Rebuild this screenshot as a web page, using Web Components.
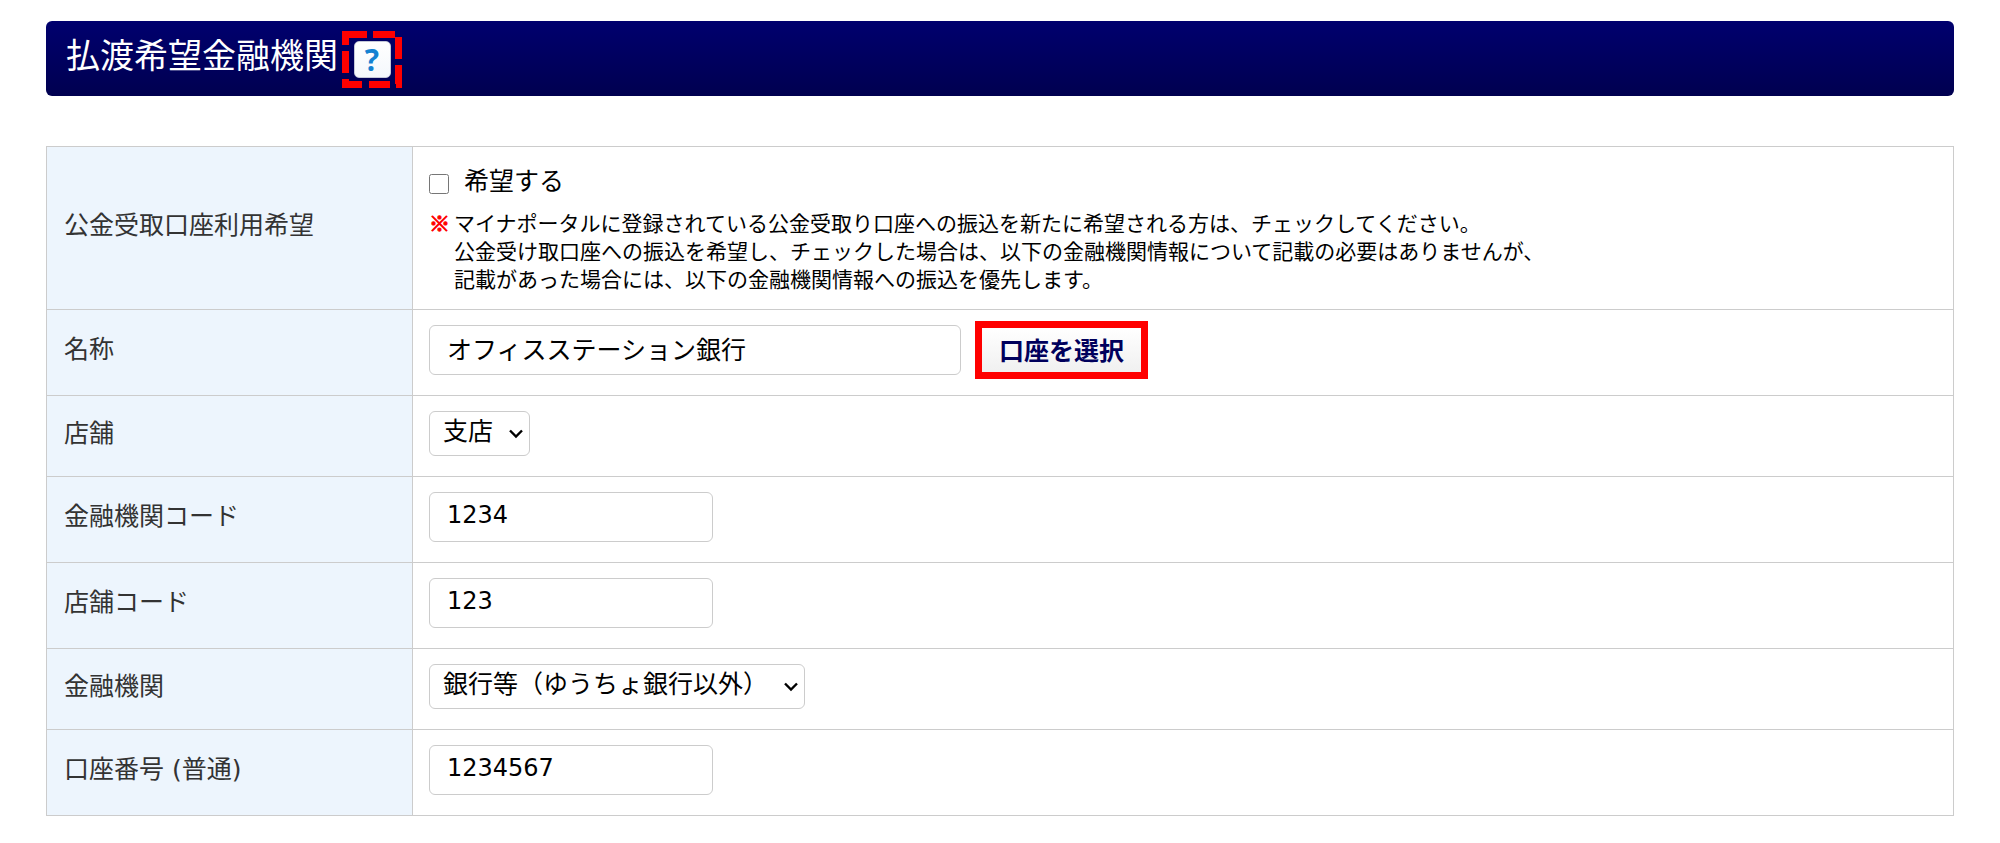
<!DOCTYPE html>
<html lang="ja">
<head>
<meta charset="utf-8">
<title>払渡希望金融機関</title>
<style>
body {
    margin: 0;
    padding: 21px 46px;
    background: #fff;
    color: #000;
    font-family: "DejaVu Sans", "Noto Sans CJK JP", sans-serif;
    font-size: 25px;
}
</style>
</head>
<body>

<section-title>払渡希望金融機関<help-button slot="help"></help-button></section-title>
<account-form></account-form>

<template id="section-title">
<style>
:host {
    display: flex;
    align-items: center;
    gap: 4px;
    min-height: 75px;
    padding: 0 20px;
    box-sizing: border-box;
    border-radius: 6px;
    background: linear-gradient(#00006e, #000050);
    color: #fff;
}
h2 {
    margin: 0;
    padding-bottom: 10px;
    font-family: "Noto Sans CJK JP", sans-serif;
    font-size: 34px;
    font-weight: 400;
    line-height: 48px;
}
</style>
<h2><slot></slot></h2>
<slot name="help"></slot>
</template>

<template id="help-button">
<style>
:host {
    display: grid;
    place-items: center;
    padding-top: 2px;
}
svg, button {
    grid-area: 1 / 1;
}
svg {
    width: 60px;
    height: 57px;
    fill: #f00;
}
button {
    width: 37px;
    height: 37px;
    padding: 0;
    border: 1px solid #c4c8d8;
    border-radius: 5px;
    background: linear-gradient(#fff, #f4f8fc);
    color: #1482d2;
    font: 700 30px/34px "Open Sans", sans-serif;
}
</style>
<svg viewBox="0 0 60 57" aria-hidden="true">
    <path d="M0 0h25v7H7v7H0zM31 0h22v7H31zM53 6h7v22h-7zM53 34h7v23h-6v-4h-1zM0 20h7v22H0zM0 48h7v2h13v7H0zM27 50h21v7H27z"/>
</svg>
<button type="button" aria-label="ヘルプ">?</button>
</template>

<template id="select-box">
<style>
:host {
    display: inline-grid;
    align-items: center;
    vertical-align: top;
}
slot, svg {
    grid-area: 1 / 1;
}
svg {
    justify-self: end;
    width: 16px;
    height: 10px;
    margin-right: 6px;
    pointer-events: none;
    fill: none;
    stroke: #000;
    stroke-width: 2.4;
}
::slotted(select) {
    grid-area: 1 / 1;
}
</style>
<slot></slot>
<svg viewBox="0 0 16 10" aria-hidden="true"><path d="M2 1.5l6 6 6-6"/></svg>
</template>

<template id="note-text">
<style>
:host {
    display: flex;
    gap: 4px;
    padding-top: 7px;
    font-family: "Noto Sans CJK JP", sans-serif;
    font-size: 21px;
    line-height: 28px;
}
b {
    color: #f00;
    -webkit-text-stroke: 1px #f00;
}
p {
    margin: 0;
}
</style>
<b>※</b>
<p><slot></slot></p>
</template>

<template id="account-form">
<style>
:host {
    display: block;
    margin-top: 50px;
}
table {
    width: 100%;
    border-collapse: collapse;
}
th, td {
    padding: 15px 16px 20px;
    border: 1px solid #ccc;
    text-align: left;
}
th {
    width: 332px;
    padding-left: 17px;
    background: #edf5fd;
    color: #333;
    font-weight: 400;
    line-height: 38px;
}
td.agree {
    padding-top: 16px;
    padding-bottom: 17px;
}
.check {
    display: flex;
    align-items: center;
    gap: 15px;
    line-height: 38px;
}
input[type=checkbox] {
    width: 20px;
    height: 20px;
    margin: 4px 0 0;
}
input[type=text], select {
    box-sizing: border-box;
    border: 1px solid #ccc;
    border-radius: 6px;
    background: #fff;
    color: #000;
    font: inherit;
}
input[type=text] {
    display: block;
    width: 284px;
    height: 50px;
    padding: 0 17px 4px;
}
input.number {
    font-size: 24px;
}
input.name {
    width: 532px;
}
select {
    height: 45px;
    padding: 0 35px 4px 13px;
    appearance: none;
}
.line {
    display: flex;
    align-items: center;
    gap: 21px;
}
.choose {
    height: 44px;
    padding: 0 17px 2px;
    border: 0;
    outline: 7px solid #f00;
    background: linear-gradient(#fff, #f0f0f0);
    color: #00005c;
    font: inherit;
    font-weight: 700;
}
</style>
<form>
<table>
    <tr>
        <th scope="row">公金受取口座利用希望</th>
        <td class="agree">
            <div class="check"><input type="checkbox" id="agree"><label for="agree">希望する</label></div>
            <note-text>マイナポータルに登録されている公金受取り口座への振込を新たに希望される方は、チェックしてください。<br>公金受け取口座への振込を希望し、チェックした場合は、以下の金融機関情報について記載の必要はありませんが、<br>記載があった場合には、以下の金融機関情報への振込を優先します。</note-text>
        </td>
    </tr>
    <tr>
        <th scope="row"><label for="name">名称</label></th>
        <td>
            <div class="line">
                <input type="text" id="name" class="name" value="オフィスステーション銀行">
                <button type="button" class="choose">口座を選択</button>
            </div>
        </td>
    </tr>
    <tr>
        <th scope="row"><label for="branch">店舗</label></th>
        <td><select-box><select id="branch"><option>支店</option></select></select-box></td>
    </tr>
    <tr>
        <th scope="row"><label for="bank-code">金融機関コード</label></th>
        <td><input type="text" id="bank-code" class="number" value="1234"></td>
    </tr>
    <tr>
        <th scope="row"><label for="branch-code">店舗コード</label></th>
        <td><input type="text" id="branch-code" class="number" value="123"></td>
    </tr>
    <tr>
        <th scope="row"><label for="bank-type">金融機関</label></th>
        <td><select-box><select id="bank-type"><option>銀行等（ゆうちょ銀行以外）</option></select></select-box></td>
    </tr>
    <tr>
        <th scope="row"><label for="account">口座番号 (普通)</label></th>
        <td><input type="text" id="account" class="number" value="1234567"></td>
    </tr>
</table>
</form>
</template>

<script>
class TemplateElement extends HTMLElement {

    constructor() {
        super();
        this.attachShadow({mode: 'open'});
        const template = document.getElementById(this.localName);
        this.shadowRoot.appendChild(template.content.cloneNode(true));
    }

}

class SectionTitle extends TemplateElement {}
class HelpButton extends TemplateElement {}
class SelectBox extends TemplateElement {}
class NoteText extends TemplateElement {}
class AccountForm extends TemplateElement {}

customElements.define('help-button', HelpButton);
customElements.define('section-title', SectionTitle);
customElements.define('select-box', SelectBox);
customElements.define('note-text', NoteText);
customElements.define('account-form', AccountForm);
</script>
</body>
</html>
